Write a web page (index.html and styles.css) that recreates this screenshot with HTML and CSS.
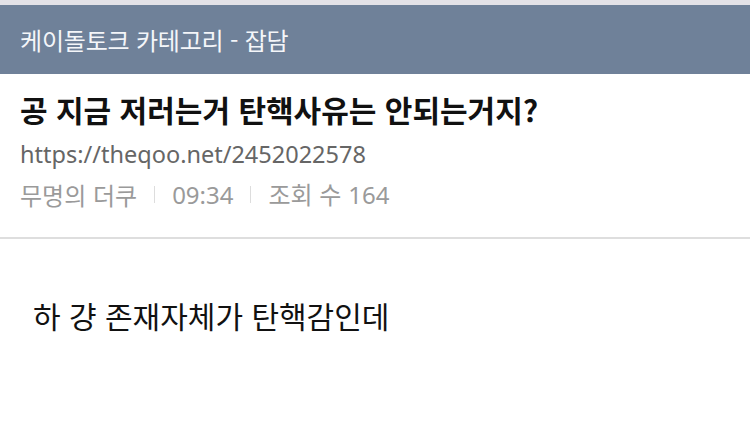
FILE: index.html
```html
<!DOCTYPE html>
<html lang="ko">
  <head>
    <meta charset="UTF-8" />
    <meta name="viewport" content="width=device-width, initial-scale=1.0" />
    <title>공 지금 저러는거 탄핵사유는 안되는거지?</title>
    <link rel="stylesheet" href="styles.css">
  </head>
  <body>
    <div class="status-strip"></div>

    <header class="category-bar">
      <span class="category-name">케이돌토크 카테고리 - 잡담</span>
    </header>

    <section class="post-head">
      <h1 class="post-title">공 지금 저러는거 탄핵사유는 안되는거지?</h1>
      <div class="post-url">https://theqoo.net/2452022578</div>
      <div class="post-meta">
        <span>무명의 더쿠</span>
        <span class="sep"></span>
        <span class="num">09:34</span>
        <span class="sep"></span>
        <span>조회 수 <span class="num">164</span></span>
      </div>
    </section>

    <article class="post-body">
      <p>하 걍 존재자체가 탄핵감인데</p>
    </article>
  </body>
</html>
```

FILE: styles.css
```css
body {
  font-family: "Noto Sans CJK KR", "Noto Sans", sans-serif;
  margin: 0;
  padding: 0;
  background-color: white;
  color: #111;
}

.status-strip {
  height: 5px;
  background-color: #e3e2e7;
}

.category-bar {
  display: flex;
  align-items: center;
  height: 69px;
  padding: 0 20px;
  background-color: #6f8199;
}

.category-name {
  font-size: 24px;
  letter-spacing: -0.2px;
  color: #f4f6f9;
}

.post-head {
  padding: 15px 20px 0 20px;
  height: 148px;
  border-bottom: 2px solid #dedede;
}

.post-title {
  margin: 0;
  font-size: 30px;
  font-weight: 700;
  line-height: 40px;
  color: #111;
}

.post-url {
  margin-top: 10px;
  font-family: "Noto Sans", sans-serif;
  font-size: 23.5px;
  line-height: 30px;
  color: #666;
}

.post-meta {
  display: flex;
  align-items: center;
  gap: 17px;
  margin-top: 9px;
  font-size: 24px;
  line-height: 32px;
  color: #9a9a9a;
}

.post-meta .num {
  font-family: "Noto Sans", sans-serif;
}

.sep {
  width: 1px;
  height: 17px;
  background-color: #ddd;
}

.post-body {
  padding: 56px 33px;
}

.post-body p {
  margin: 0;
  font-size: 30px;
  line-height: 40px;
  color: #111;
}
```
